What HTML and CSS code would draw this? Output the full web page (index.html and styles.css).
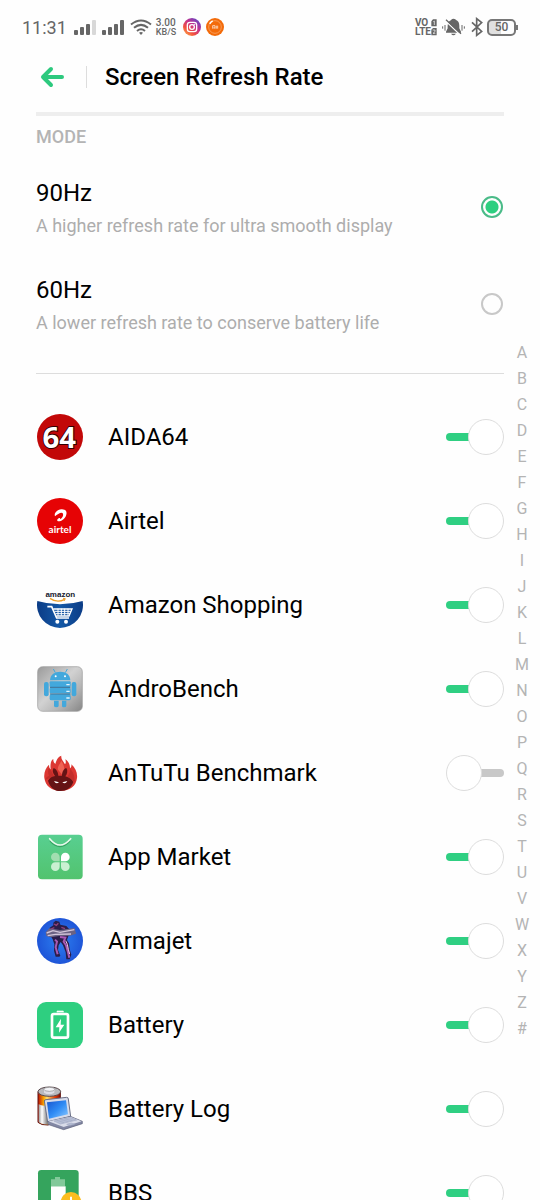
FILE: index.html
```html
<!DOCTYPE html>
<html lang="en">
<head>
  <meta charset="UTF-8">
  <meta name="viewport" content="width=device-width, initial-scale=1">
  <title>Screen Refresh Rate</title>
  <link rel="stylesheet" href="styles.css">
</head>
<body>
  <div class="screen">
    <div class="status">
      <span class="time">11:31</span>
      <svg class="signal" width="22" height="16" viewBox="0 0 22 16" fill="#666">
        <rect x="0" y="11" width="4" height="5" rx="1"/><rect x="6" y="8" width="4" height="8" rx="1"/>
        <rect x="12" y="5" width="4" height="11" rx="1"/><rect x="18" y="1" width="4" height="15" rx="1" fill="#d8d8d8"/>
      </svg>
      <svg class="signal" width="22" height="16" viewBox="0 0 22 16" fill="#666">
        <rect x="0" y="11" width="4" height="5" rx="1"/><rect x="6" y="8" width="4" height="8" rx="1"/>
        <rect x="12" y="5" width="4" height="11" rx="1"/><rect x="18" y="1" width="4" height="15" rx="1"/>
      </svg>
      <svg width="22" height="16" viewBox="0 0 22 16" fill="none" stroke="#666" stroke-width="2">
        <path d="M1 5.500Q11-2.500 21 5.500M4 8.800Q11 3 18 8.800M7 12Q11 8.600 15 12"/>
        <path d="M9 13.800Q11 12.200 13 13.800L11 16z" fill="#666" stroke="none"/>
      </svg>
      <span class="speed">3.00<br><span class="unit">KB/S</span></span>
      <svg class="badge" width="18" height="18" viewBox="0 0 54 54">
        <defs><linearGradient id="insta" x1="0" y1="1" x2=".8" y2="0">
          <stop offset="0" stop-color="#fdc04c"/><stop offset=".35" stop-color="#f2503f"/>
          <stop offset=".65" stop-color="#c3308e"/><stop offset="1" stop-color="#5a48c9"/>
        </linearGradient></defs>
        <circle cx="27" cy="27" r="27" fill="url(#insta)"/>
        <g fill="none" stroke="#fff" stroke-width="4"><rect x="13" y="13" width="28" height="28" rx="8"/><circle cx="27" cy="27" r="7"/></g>
        <circle cx="35" cy="19" r="2" fill="#fff"/>
      </svg>
      <svg width="18" height="18" viewBox="0 0 54 54">
        <circle cx="27" cy="27" r="27" fill="#f36b0a"/>
        <circle cx="27" cy="27" r="19" fill="none" stroke="#fbb27c" stroke-width="2"/>
        <path d="M11 17Q15 11 20 9" stroke="#fff" stroke-width="5" fill="none"/>
        <path d="M20 32V23H27V32M24 27V32M31 23V32M35 23V32" stroke="#fff" stroke-width="2" fill="none"/>
      </svg>

      <span class="volte">VO<br>LTE</span>
      <svg width="6" height="17" viewBox="0 0 18 51" fill="#666">
        <path d="M6 1H17V22H1V7zM1 32L6 27H17V49H1z"/>
        <path d="M7 8L10 6V18M5 33H12V38L6 43H13" stroke="#fff" stroke-width="2" fill="none"/>
      </svg>
      <svg class="bell" width="23" height="18" viewBox="0 0 69 54" fill="#666">
        <path d="M34 2C40 2 42 6 46 8C52 12 52 20 52 31L57 41V44H12V41L17 31C17 18 18 12 24 8C28 6 29 2 34 2zM27 47H42Q34 56 27 47z"/>
        <path d="M9 7L55 51" stroke="#fff" stroke-width="4"/><path d="M12 5L57 47" stroke="#666" stroke-width="4"/>
        <path d="M2 25V32M9 21V38M60 21V38M67 25V32" stroke="#666" stroke-width="3"/>
      </svg>
      <svg class="bluetooth" width="12" height="20" viewBox="0 0 36 60" fill="none" stroke="#666" stroke-width="5">
        <path d="M3 16L32 43L17 55V5L32 17L3 44"/>
      </svg>
      <span class="battery">50</span>
    </div>

    <header class="header">
      <button class="back" aria-label="Back">
        <svg width="24" height="22" viewBox="0 0 24 22" fill="none" stroke="#2dc97e" stroke-width="4" stroke-linecap="round" stroke-linejoin="round">
          <path d="M11 3L3 11L11 19M3 11H22"/>
        </svg>
      </button>
      <h1>Screen Refresh Rate</h1>
    </header>

    <main class="content">
      <h2 class="mode-title">MODE</h2>
      <label class="mode">
        <span class="mode-text">
          <span class="name">90Hz</span>
          <span class="desc">A higher refresh rate for ultra smooth display</span>
        </span>
        <input class="radio" type="radio" name="rate" checked>
      </label>
      <label class="mode">
        <span class="mode-text">
          <span class="name">60Hz</span>
          <span class="desc">A lower refresh rate to conserve battery life</span>
        </span>
        <input class="radio" type="radio" name="rate">
      </label>

      <div class="apps">
        <label class="app">
          <svg class="icon" viewBox="0 0 138 138">
            <circle cx="69" cy="69" r="69" fill="#c20808"/>
            <text class="t-aida" x="67" y="102">64</text>
          </svg>
          <span class="name">AIDA64</span>
          <input class="switch" type="checkbox" checked>
        </label>

        <label class="app">
          <svg class="icon" viewBox="0 0 138 138">
            <circle cx="69" cy="69" r="69" fill="#e60305"/>
            <path d="M54 55C50 45 61 35 73 34C86 33 92 42 87 53C83 63 73 70 65 70C59 70 59 64 65 61C71 58 69 62 69 64C76 61 80 52 78 47C74 40 62 49 54 55z" fill="#fff"/>
            <text class="t-airtel" x="69" y="106">airtel</text>
          </svg>
          <span class="name">Airtel</span>
          <input class="switch" type="checkbox" checked>
        </label>

        <label class="app">
          <svg class="icon" viewBox="0 0 138 138">
            <defs><linearGradient id="amz" x1="0" x2="1"><stop offset="0" stop-color="#0b3c86"/><stop offset=".5" stop-color="#1458a6"/><stop offset="1" stop-color="#0b3c86"/></linearGradient></defs>
            <path d="M1 57Q69 77 137 57A69 69 0 1 1 1 57z" fill="url(#amz)"/>
            <text class="t-amazon" x="70" y="46">amazon</text>
            <path d="M39 49Q60 64 83 52" fill="none" stroke="#eda12d" stroke-width="4"/>
            <path d="M78 49L85 50L81 57" fill="none" stroke="#eda12d" stroke-width="3"/>
            <g fill="none" stroke="#fff">
              <path d="M31 74H44L59 108H96" stroke-width="5"/><path d="M49 81H105L96 102H58" stroke-width="4"/>
              <path d="M53 88H102M56 95H99M63 80V101M73 80V101M83 80V101M93 80V101" stroke-width="3"/>
            </g>
            <circle cx="61" cy="119" r="6" fill="#fff"/><circle cx="87" cy="119" r="6" fill="#fff"/>
          </svg>
          <span class="name">Amazon Shopping</span>
          <input class="switch" type="checkbox" checked>
        </label>

        <label class="app">
          <svg class="icon" viewBox="0 0 138 138">
            <defs><linearGradient id="steel" x1="0" y1="0" x2="1" y2="1"><stop offset="0" stop-color="#9a9a9a"/><stop offset=".45" stop-color="#d2d2d2"/><stop offset=".7" stop-color="#b5b5b5"/><stop offset="1" stop-color="#858585"/></linearGradient></defs>
            <rect x="2" y="2" width="134" height="134" rx="15" fill="url(#steel)" stroke="#999" stroke-width="2"/>
            <g fill="#43a8dc">
              <path d="M39 43C40 25 53 17 70 17S99 25 100 43z"/>
              <rect x="38" y="46" width="63" height="17" rx="3"/><rect x="38" y="66" width="63" height="16" rx="3"/><rect x="38" y="85" width="63" height="18" rx="5"/>
              <rect x="21" y="48" width="14" height="43" rx="6"/><rect x="104" y="48" width="14" height="43" rx="6"/>
              <path d="M51 104H65V119Q65 124 58 124T51 119zM75 104H88V119Q88 124 81 124T75 119z"/>
            </g>
            <path d="M55 20L49 9M85 20L91 9" stroke="#43a8dc" stroke-width="3"/>
            <path d="M39 64H100M39 84H100" stroke="#276c99" stroke-width="3"/>
            <circle cx="56" cy="31" r="3" fill="#fff"/><circle cx="84" cy="31" r="3" fill="#fff"/>
            <path d="M88 56H98M88 76H98M88 96H98" stroke="#e4f5fe" stroke-width="4"/>
          </svg>
          <span class="name">AndroBench</span>
          <input class="switch" type="checkbox" checked>
        </label>

        <label class="app">
          <svg class="icon" viewBox="0 0 138 138">
            <path d="M22 84C20 68 26 54 36 44C36 52 38 56 41 58C39 42 42 31 49 26C48 34 51 38 55 42C58 31 62 21 73 17C71 28 80 34 84 43C87 39 87 35 85 28C96 35 99 45 99 55C103 52 104 48 103 43C115 54 122 68 120 84C118 108 97 123 71 123C45 123 25 108 22 84z" fill="#dc3732"/>
            <path d="M24 90C26 83 31 79 36 77C32 68 33 60 36 54C43 62 47 70 51 79zM91 80C98 71 99 62 100 56C109 67 114 78 112 95z" fill="#c42e2b"/>
            <path d="M73 32C69 43 63 46 62 58L78 77C85 60 82 47 73 32z" fill="#ef6254"/>
            <path d="M33 92C38 83 47 79 54 78C47 69 45 60 50 54C58 56 64 68 64 77H75C75 66 80 56 88 54C93 62 91 72 85 79C96 82 104 88 109 96C103 114 88 123 70 123C52 123 39 112 33 92z" fill="#651315"/>
            <path d="M51 93L66 97Q57 104 51 93M91 93L76 97Q85 104 91 93" fill="#fff"/>
          </svg>
          <span class="name">AnTuTu Benchmark</span>
          <input class="switch" type="checkbox">
        </label>

        <label class="app">
          <svg class="icon" viewBox="0 0 138 138">
            <defs><linearGradient id="bag" x1="0" y1="0" x2="0" y2="1"><stop offset="0" stop-color="#58cf91"/><stop offset="1" stop-color="#52c36e"/></linearGradient></defs>
            <rect x="3" y="2" width="134" height="134" rx="12" fill="url(#bag)"/>
            <path d="M39 21Q69 54 99 21" fill="none" stroke="#37a363" stroke-width="4"/>
            <path d="M38 14Q69 52 101 14" fill="none" stroke="#e7f8eb" stroke-width="5" stroke-linecap="round"/>
            <path d="M68 82H55A13 13 0 1 1 68 69z" fill="#a2deb0"/>
            <path d="M72 82V69A13 13 0 1 1 85 82z" fill="#fff"/>
            <path d="M68 85V98A13 13 0 1 1 55 85zM72 85H85A13 13 0 1 1 72 98z" fill="#caf0d2"/>
          </svg>
          <span class="name">App Market</span>
          <input class="switch" type="checkbox" checked>
        </label>

        <label class="app">
          <svg class="icon" viewBox="0 0 138 138">
            <defs><radialGradient id="sky"><stop offset="0" stop-color="#2c7ff0"/><stop offset="1" stop-color="#1e55d8"/></radialGradient></defs>
            <circle cx="69" cy="69" r="69" fill="url(#sky)"/>
            <path d="M49 14L56 8L67 11L70 20L88 24L97 34L96 49L90 66L96 76L98 94L103 110L98 124H88L86 103L78 82L71 72L65 82L63 96L70 113L67 116H56L51 98L52 79L47 64L41 54L32 52L38 29L49 22z" fill="#2b1d49"/>
            <path d="M26 43L37 31L69 36L113 30L117 47L100 53L66 54L41 58L28 54z" fill="#6b6283"/>
            <path d="M29 45L48 38L69 43L112 35M32 53L55 49L102 48" stroke="#d3c6da" stroke-width="4" fill="none"/>
            <path d="M69 57L85 59L80 71L87 82L93 103L97 119M54 65L60 71L56 88L62 109" stroke="#a85ab4" stroke-width="6" fill="none"/>
            <path d="M86 68L91 79L94 94L98 108" stroke="#f0c8ec" stroke-width="3" fill="none"/>
            <path d="M51 18L58 22L64 16M42 33L52 29M73 28L84 32" stroke="#91427a" stroke-width="4" fill="none"/>
          </svg>
          <span class="name">Armajet</span>
          <input class="switch" type="checkbox" checked>
        </label>

        <label class="app">
          <svg class="icon" viewBox="0 0 138 138">
            <rect width="138" height="138" rx="27" fill="#2ecf80"/>
            <path d="M60 31V27H79V31" fill="#fff" stroke="#fff" stroke-width="2"/>
            <rect x="45" y="36" width="48" height="71" rx="5" fill="none" stroke="#fff" stroke-width="8"/>
            <path d="M72 50L56 76H67L66 92L82 68H71z" fill="#fff"/>
          </svg>
          <span class="name">Battery</span>
          <input class="switch" type="checkbox" checked>
        </label>

        <label class="app">
          <svg class="icon" viewBox="0 0 138 138">
            <defs>
              <linearGradient id="cell" x1="0" x2="1"><stop offset="0" stop-color="#b90e05"/><stop offset=".25" stop-color="#f6a100"/><stop offset=".4" stop-color="#ffe06c"/><stop offset=".75" stop-color="#e83c05"/><stop offset="1" stop-color="#7d1108"/></linearGradient>
              <linearGradient id="lcd" x1="0" y1="0" x2="1" y2="1"><stop offset="0" stop-color="#1855cf"/><stop offset=".5" stop-color="#2f8cf5"/><stop offset="1" stop-color="#8cc9ff"/></linearGradient>
              <linearGradient id="cellbase" x1="0" x2="1"><stop offset="0" stop-color="#999"/><stop offset=".4" stop-color="#fff"/><stop offset="1" stop-color="#888"/></linearGradient>
            </defs>
            <path d="M3 17V109Q13 118 33 117L70 102V17z" fill="url(#cell)" stroke="#61110e" stroke-width="3"/>
            <path d="M5 55Q18 62 30 58V115Q12 115 5 108z" fill="url(#cellbase)"/>
            <ellipse cx="37" cy="17" rx="34" ry="14" fill="#b9b9bd" stroke="#59484c" stroke-width="3"/>
            <path d="M21 10V20Q36 29 52 20V10" fill="#dddde5"/><ellipse cx="37" cy="10" rx="16" ry="6" fill="#f3f3f7" stroke="#888" stroke-width="2"/>
            <path d="M22 45Q22 41 27 41L89 34Q94 34 94 39L101 92L32 108z" fill="#d6dbea" stroke="#6b7087" stroke-width="3"/>
            <path d="M30 49L87 43L93 85L36 98z" fill="url(#lcd)"/>
            <path d="M32 107L100 91L136 106V113L80 131L32 115z" fill="#8388a4" stroke="#5a5f78" stroke-width="2"/>
            <path d="M34 106L100 92L134 106L80 123z" fill="#d9dce9"/>
            <path d="M51 105L98 94L119 102L70 114zM60 103L81 110M70 100L94 107M82 98L106 104M89 115L102 111L113 114L99 118z" fill="#b6bed5" stroke="#a3aac4" stroke-width="2"/>
          </svg>
          <span class="name">Battery Log</span>
          <input class="switch" type="checkbox" checked>
        </label>

        <label class="app">
          <svg class="icon" viewBox="0 0 138 138">
            <rect x="3" y="0" width="122" height="134" rx="10" fill="#35a45d"/>
            <path d="M42 28H54V21H69V28H84V49H42z" fill="#82c99a"/>
            <path d="M42 49H86V114H42z" fill="#fff"/>
            <circle cx="102" cy="97" r="31" fill="#fcbd20"/>
            <path d="M102 80V99M102 105V111" stroke="#fff" stroke-width="6"/>
          </svg>
          <span class="name">BBS</span>
          <input class="switch" type="checkbox" checked>
        </label>
      </div>
    </main>

    <nav class="index" aria-label="Jump to letter">
      <a href="#">A</a><a href="#">B</a><a href="#">C</a><a href="#">D</a><a href="#">E</a><a href="#">F</a><a href="#">G</a>
      <a href="#">H</a><a href="#">I</a><a href="#">J</a><a href="#">K</a><a href="#">L</a><a href="#">M</a><a href="#">N</a>
      <a href="#">O</a><a href="#">P</a><a href="#">Q</a><a href="#">R</a><a href="#">S</a><a href="#">T</a><a href="#">U</a>
      <a href="#">V</a><a href="#">W</a><a href="#">X</a><a href="#">Y</a><a href="#">Z</a><a href="#">#</a>
    </nav>
  </div>
</body>
</html>
```
FILE: styles.css
```css
*, *::before, *::after { box-sizing: border-box; }
body {
  margin: 0;
  background: #fefefe;
  color: #000;
  font-family: Roboto, sans-serif;
}
.screen {
  position: relative;
  display: flex;
  flex-direction: column;
  height: 100vh;
  overflow: hidden;
}

/* status bar */
.status {
  display: flex;
  align-items: center;
  height: 54px;
  padding: 0 24px 0 22px;
  color: #666;
}
.time { font-size: 18px; margin-right: 7px; }
.signal { margin-right: 6px; }
.speed {
  font-size: 10px;
  font-weight: 500;
  line-height: 9px;
  margin-left: 4px;
}
.unit { font-size: 9px; }
.badge { margin: 0 5px 0 7px; }
.volte {
  margin-left: auto;
  font-size: 10px;
  font-weight: 700;
  line-height: 9px;
}
.bell { margin: 0 6px 0 5px; }
.bluetooth { margin-right: 4px; }
.battery {
  position: relative;
  width: 29px;
  border: 2px solid #777;
  border-radius: 5px;
  background: linear-gradient(90deg, #e0e0e0 50%, #fefefe 50%);
  font-size: 12px;
  font-weight: 500;
  line-height: 13px;
  text-align: center;
}
.battery::after {
  content: "";
  position: absolute;
  right: -4px;
  top: 4px;
  width: 2px;
  height: 5px;
  background: #777;
}

/* title bar */
.header {
  display: flex;
  align-items: center;
  height: 62px;
  margin: 0 36px;
  padding-bottom: 12px;
  border-bottom: 4px solid #eee;
}
.back {
  display: flex;
  height: 22px;
  padding: 0 22px 0 4px;
  border: 0;
  border-right: 1px solid #ddd;
  background: none;
  cursor: pointer;
}
h1 {
  margin: 0;
  padding-left: 18px;
  font-size: 24px;
  font-weight: 500;
}

.content {
  flex: 1;
  min-height: 0;
  padding: 0 36px;
  overflow-y: auto;
  scrollbar-width: none;
}
.mode-title {
  margin: 0;
  font-size: 18px;
  font-weight: 500;
  line-height: 42px;
  color: #b4b4b4;
}
.mode {
  display: flex;
  align-items: center;
  justify-content: space-between;
  height: 97px;
  padding-right: 1px;
}
.mode-text {
  display: flex;
  flex-direction: column;
  gap: 5px;
  padding-top: 4px;
}
.name { font-size: 24px; line-height: 30px; }
.desc { font-size: 18px; line-height: 26px; color: #adadad; }

.radio {
  appearance: none;
  width: 22px;
  height: 22px;
  margin: 0;
  border: 2px solid #c8c8c8;
  border-radius: 50%;
}
.radio:checked {
  border-color: #4abb88;
  background: radial-gradient(circle, #2dcf80 6px, #fefefe 7px);
}

/* app list */
.apps {
  margin-top: 21px;
  padding-top: 21px;
  border-top: 1px solid #ddd;
}
.app {
  display: flex;
  align-items: center;
  height: 84px;
}
.app .name { flex: 1; }
.icon {
  width: 46px;
  height: 46px;
  margin: 0 25px 0 1px;
}
.t-aida {
  font: 700 88px "Open Sans", sans-serif;
  text-anchor: middle;
  fill: #fff;
  stroke: #300;
  stroke-width: 6px;
  paint-order: stroke;
}
.t-airtel { font: 700 30px Lato, sans-serif; text-anchor: middle; fill: #fff; }
.t-amazon { font: 700 24px "Liberation Sans", sans-serif; text-anchor: middle; fill: #18202e; }

.switch {
  appearance: none;
  display: flex;
  flex-direction: row-reverse;
  align-items: center;
  width: 58px;
  height: 36px;
  margin: 0;
}
.switch::before {
  content: "";
  flex: 1;
  height: 8px;
  margin-left: -2px;
  border-radius: 0 4px 4px 0;
  background: #c8c8c8;
}
.switch::after {
  content: "";
  position: relative;
  width: 36px;
  height: 36px;
  border: 1px solid #ddd;
  border-radius: 50%;
  background: #fff;
}
.switch:checked { flex-direction: row; }
.switch:checked::before {
  margin: 0 -2px 0 0;
  border-radius: 4px 0 0 4px;
  background: #2fcf82;
}

/* letters over the right edge */
.index {
  position: absolute;
  top: 340px;
  right: 6px;
  width: 24px;
}
.index a {
  display: block;
  font-size: 16px;
  line-height: 26px;
  text-align: center;
  text-decoration: none;
  color: #b4b4b4;
}
```
